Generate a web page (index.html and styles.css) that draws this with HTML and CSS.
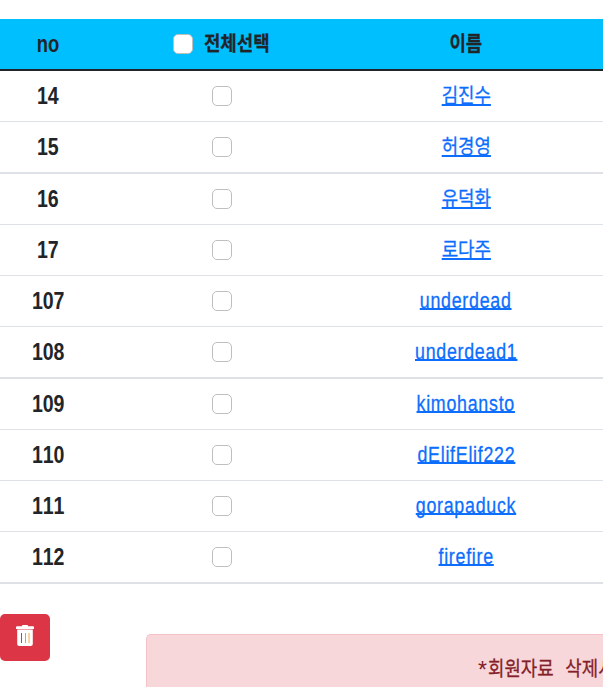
FILE: index.html
```html
<!DOCTYPE html>
<html lang="ko">
<head>
  <meta charset="UTF-8">
  <meta name="viewport" content="width=device-width, initial-scale=1.0">
  <link rel="stylesheet" href="styles.css">
  <title>회원자료</title>
</head>
<body>
  <table class="members">
    <colgroup>
      <col class="col-no">
      <col class="col-check">
      <col class="col-name">
    </colgroup>
    <thead>
      <tr>
        <th><span class="no">no</span></th>
        <th>
          <label class="check-all"><input type="checkbox" class="check"><span class="ko">전체선택</span></label>
        </th>
        <th><span class="ko">이름</span></th>
      </tr>
    </thead>
    <tbody>
      <tr><th><span class="no">14</span></th><td><input type="checkbox" class="check"></td><td><a href="#" class="ko">김진수</a></td></tr>
      <tr class="thick"><th><span class="no">15</span></th><td><input type="checkbox" class="check"></td><td><a href="#" class="ko">허경영</a></td></tr>
      <tr><th><span class="no">16</span></th><td><input type="checkbox" class="check"></td><td><a href="#" class="ko">유덕화</a></td></tr>
      <tr><th><span class="no">17</span></th><td><input type="checkbox" class="check"></td><td><a href="#" class="ko">로다주</a></td></tr>
      <tr><th><span class="no">107</span></th><td><input type="checkbox" class="check"></td><td><a href="#" class="en">underdead</a></td></tr>
      <tr class="thick"><th><span class="no">108</span></th><td><input type="checkbox" class="check"></td><td><a href="#" class="en">underdead1</a></td></tr>
      <tr><th><span class="no">109</span></th><td><input type="checkbox" class="check"></td><td><a href="#" class="en">kimohansto</a></td></tr>
      <tr><th><span class="no">110</span></th><td><input type="checkbox" class="check"></td><td><a href="#" class="en">dElifElif222</a></td></tr>
      <tr><th><span class="no">111</span></th><td><input type="checkbox" class="check"></td><td><a href="#" class="en">gorapaduck</a></td></tr>
      <tr class="thick"><th><span class="no">112</span></th><td><input type="checkbox" class="check"></td><td><a href="#" class="en">firefire</a></td></tr>
    </tbody>
  </table>

  <div class="bottom">
    <button type="button" class="btn-delete" aria-label="삭제">
      <svg width="18" height="21" viewBox="0 0 18 21">
        <path fill="#fff" d="M0 2.2Q0 1.2 1 1.2H5.7L6.5 0H11.5L12.3 1.2H17Q18 1.2 18 2.2V4H0Z"/>
        <path fill="#fff" d="M1.2 4.6H16.8V19Q16.8 21 14.8 21H3.2Q1.2 21 1.2 19Z"/>
        <path stroke="#dc3545" d="M5.5 8V18"/>
        <path stroke="#d98fae" d="M9.5 8V18"/>
        <path stroke="#f5a84b" d="M13 8V18"/>
      </svg>
    </button>
    <div class="alert"><span class="star">*</span><span class="ko">회원자료&nbsp; 삭제시</span></div>
  </div>
</body>
</html>
```

FILE: styles.css
```css
* {
  box-sizing: border-box;
}

body {
  margin: 0;
  padding-top: 19px;
  height: 687px;
  overflow: hidden;
  background: #fff;
  color: #212529;
  font-family: "Liberation Sans", Arial, "Noto Sans CJK KR", sans-serif;
  font-size: 24px;
  line-height: 32px;
}

.members {
  width: 100%;
  table-layout: fixed;
  border-collapse: separate;
  border-spacing: 0;
  text-align: center;
}

.col-no {
  width: 96px;
}

.col-check {
  width: 252px;
}

.members th,
.members td {
  height: 51px;
  padding: 0;
  border-bottom: 1px solid #dee2e6;
  vertical-align: middle;
  line-height: 0;
}

.members th:last-child,
.members td:last-child {
  padding-right: 19px;
}

.members .thick th,
.members .thick td {
  height: 52px;
  border-bottom-width: 2px;
}

.members thead th {
  height: 52px;
  background: #00bfff;
  border-bottom: 2px solid #212529;
}

.members a {
  color: #0d6efd;
  text-decoration: underline;
  text-decoration-thickness: 2px;
  text-underline-offset: 1px;
  text-decoration-skip-ink: none;
}

.no {
  display: inline-block;
  font-size: 23px;
  line-height: 32px;
  font-kerning: none;
  transform: scaleX(0.85);
}

thead .no {
  transform: scaleX(0.8);
}

.members .en {
  display: inline-block;
  font-size: 22px;
  line-height: 32px;
  letter-spacing: 0.9px;
  text-underline-offset: 0;
  -webkit-text-stroke: 0.3px currentColor;
  transform: scaleX(0.81);
}

.ko {
  display: inline-block;
  font-family: "Noto Sans CJK KR", sans-serif;
  font-size: 20.5px;
  line-height: 32px;
  -webkit-text-stroke: 0.3px currentColor;
  transform: scaleX(0.87) translateY(-2px);
}

.check {
  appearance: none;
  display: block;
  width: 20px;
  height: 20px;
  margin: 0 auto;
  background: #fff;
  border: 1px solid #bfbfbf;
  border-radius: 5px;
}

.check-all {
  display: flex;
  align-items: center;
  justify-content: center;
  gap: 6px;
  padding-left: 3px;
}

.check-all .check {
  margin: 0;
}

.bottom {
  display: flex;
  align-items: flex-start;
  padding-top: 30px;
}

.btn-delete {
  flex: none;
  width: 50px;
  height: 47px;
  padding: 11px 16px 15px;
  border: 0;
  border-radius: 5px;
  background: #dc3545;
}

.btn-delete svg {
  display: block;
}

.alert {
  flex: 1;
  height: 53px;
  margin: 20px 0 0 96px;
  padding: 18px 0 0 331px;
  border: 1px solid #f5c2c7;
  border-right: 0;
  border-bottom: 0;
  border-radius: 5px 0 0 0;
  background: #f8d7da;
  color: #842029;
  white-space: nowrap;
}

.star {
  font-size: 23px;
}

.alert .ko {
  margin-left: 1px;
  word-spacing: 1px;
  transform-origin: left;
}
```
